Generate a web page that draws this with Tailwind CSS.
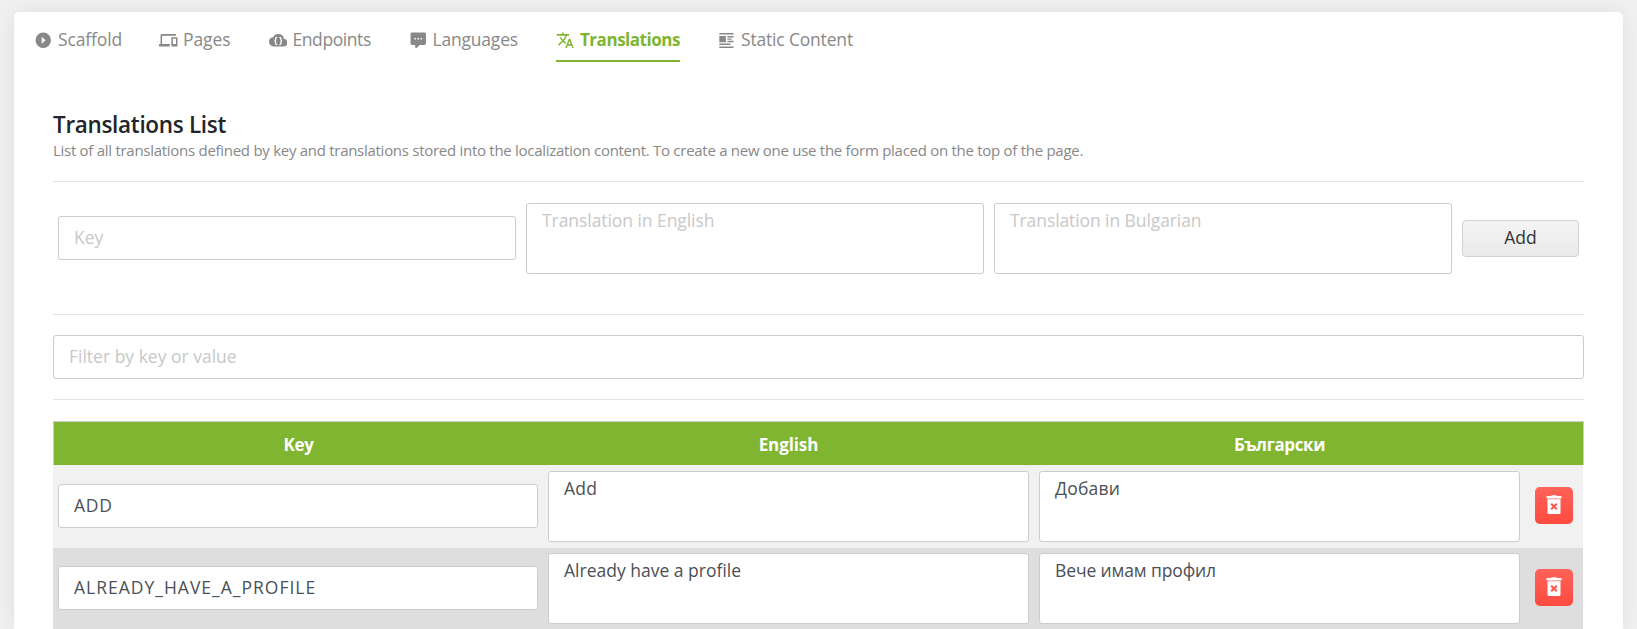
<!DOCTYPE html>
<html lang="en">
<head>
<meta charset="utf-8">
<title>Translations</title>
<script src="https://cdn.jsdelivr.net/npm/@tailwindcss/browser@4"></script>
</head>
<body class="h-[629px] overflow-hidden bg-[#f0f0f0] pt-3 pl-[14px] font-['Open_Sans',sans-serif] text-[17.5px] text-[#4b4f56]">
<main class="h-[617px] w-[1609px] rounded-t-[5px] bg-white pt-3 shadow-[0_0_20px_rgba(0,0,0,0.07)]">
  <nav class="ml-5 flex gap-[37px] leading-[31px] text-[#888] whitespace-nowrap">
    <a class="flex h-[38px] w-[88px] gap-[5.5px]">
      <svg class="mt-[7px] size-[18.5px] shrink-0" viewBox="0 0 24 24" fill="currentColor"><path fill-rule="evenodd" d="M12 2a10 10 0 1 0 0 20 10 10 0 0 0 0-20zM10 7.3v9.4l5-4.7z"/></svg>
      <span class="tracking-[-0.14px]">Scaffold</span>
    </a>
    <a class="flex h-[38px] w-[72.5px] gap-[5.5px]">
      <svg class="mt-[7px] size-[18.5px] shrink-0" viewBox="0 0 24 24" fill="currentColor"><path d="M4 6h18V4H4c-1.1 0-2 .9-2 2v11H0v3h14v-3H4V6zm19 2h-6c-.55 0-1 .45-1 1v10c0 .55.45 1 1 1h6c.55 0 1-.45 1-1V9c0-.55-.45-1-1-1zm-1 9h-4v-7h4v7z"/></svg>
      <span class="tracking-[-0.1px]">Pages</span>
    </a>
    <a class="flex h-[38px] w-[103px] gap-[5.5px]">
      <svg class="mt-[7px] size-[18.5px] shrink-0" viewBox="0 0 24 24"><path fill="currentColor" d="M19.35 10.04A7.49 7.49 0 0 0 12 4C9.11 4 6.6 5.64 5.35 8.04A5.994 5.994 0 0 0 0 14c0 3.31 2.69 6 6 6h13c2.76 0 5-2.24 5-5 0-2.64-2.05-4.78-4.65-4.96z"/><path fill="none" stroke="#fff" stroke-width="1.7" d="M10.6 8.2c-2.4 0-2 1.600-2 2.800 0 1.500-.6 1.900-1.600 1.900 1 0 1.600.5 1.600 1.900 0 1.300-.4 2.800 2 2.800M13.400 8.200c2.400 0 2 1.600 2 2.800 0 1.500.6 1.900 1.600 1.900-1 0-1.600.5-1.600 1.900 0 1.300.4 2.800-2 2.800"/></svg>
      <span class="tracking-[-0.42px]">Endpoints</span>
    </a>
    <a class="flex h-[38px] w-[110.5px] gap-[5.5px]">
      <svg class="mt-[7px] size-[18.5px] shrink-0" viewBox="0 0 24 24" fill="currentColor"><path d="M9,22A1,1 0 0,1 8,21V18H4A2,2 0 0,1 2,16V4C2,2.89 2.9,2 4,2H20A2,2 0 0,1 22,4V16A2,2 0 0,1 20,18H13.9L10.2,21.71C10,21.9 9.75,22 9.5,22V22H9M17,11V9H15V11H17M13,11V9H11V11H13M9,11V9H7V11H9Z"/></svg>
      <span class="tracking-[-0.2px]">Languages</span>
    </a>
    <a class="flex h-[38px] w-[124px] gap-[5.5px] border-b-2 border-[#7fb530] text-[17px] font-bold text-[#7fb530]">
      <svg class="mt-[7px] size-[18.5px] shrink-0" viewBox="0 0 24 24" fill="currentColor"><path d="M12.87,15.07L10.33,12.56L10.36,12.53C12.1,10.59 13.34,8.36 14.07,6H17V4H10V2H8V4H1V6H12.17C11.5,7.92 10.44,9.75 9,11.35C8.07,10.32 7.3,9.19 6.69,8H4.69C5.42,9.63 6.42,11.17 7.67,12.56L2.58,17.58L4,19L9,14L12.11,17.11L12.87,15.07M18.5,10H16.5L12,22H14L15.12,19H19.87L21,22H23L18.5,10M15.88,17L17.5,12.67L19.12,17H15.88Z"/></svg>
      <span class="tracking-[-0.47px]">Translations</span>
    </a>
    <a class="flex h-[38px] w-[137px] gap-[5.5px]">
      <svg class="mt-[7px] size-[18.5px] shrink-0" viewBox="0 0 24 24" fill="currentColor"><path d="M3 2.500h18.500v2H3zM3 6.500h8.500v8H3zM13.500 6.500h8v1.800h-8zM13.500 9.600h5.500v1.800h-5.500zM13.500 12.700h8v1.800h-8zM3 16.200h14.500v1.900H3zM3 20h18.500v2H3z"/></svg>
      <span class="tracking-[-0.18px]">Static Content</span>
    </a>
  </nav>

  <section class="mt-[47px] ml-[39px] w-[1531px]">
    <h1 class="h-[30px] text-[22.5px] leading-8 font-semibold tracking-[-0.32px] text-[#212529]">Translations List</h1>
    <p class="text-[15px] leading-[22px] tracking-[-0.279px] whitespace-nowrap text-[#888]">List of all translations defined by key and translations stored into the localization content. To create a new one use the form placed on the top of the page.</p>
    <hr class="mt-5 border-[#e4e4e4]">

    <form class="mt-[21px] flex h-[71px] items-center gap-[10px] px-[5px]">
      <input class="mb-px h-11 w-[458px] rounded-[3px] border border-[#ccc] bg-white px-[15px] pb-0.5 placeholder:text-[#c8c8c8]" placeholder="Key">
      <textarea class="block h-[71px] w-[458px] resize-none rounded-[3px] border border-[#ccc] bg-white px-[15px] pt-1 leading-6 tracking-[-0.06px] placeholder:text-[#c8c8c8]" placeholder="Translation in English"></textarea>
      <textarea class="block h-[71px] w-[458px] resize-none rounded-[3px] border border-[#ccc] bg-white px-[15px] pt-1 leading-6 tracking-[-0.09px] placeholder:text-[#c8c8c8]" placeholder="Translation in Bulgarian"></textarea>
      <button type="button" class="h-[37px] w-[117px] rounded-[4px] border border-[#d2d2d2] bg-linear-to-b from-[#f4f4f4] to-[#eaeaea] pb-0.5 text-[#333]">Add</button>
    </form>

    <hr class="mt-10 border-[#e4e4e4]">
    <input class="mt-5 block h-11 w-full rounded-[3px] border border-[#ccc] bg-white px-[15px] pb-0.5 placeholder:text-[#c8c8c8]" placeholder="Filter by key or value">
    <hr class="mt-5 border-[#e4e4e4]">

    <div class="mt-[21px]">
      <div class="grid h-11 grid-cols-[489px_491px_491px_58px] items-center border border-b-0 border-[#ccc] bg-[#7fb530] pt-[3px] text-center text-[17px] font-bold text-white">
        <span class="tracking-[-0.4px]">Key</span><span class="tracking-[-0.1px]">English</span><span class="tracking-[-0.39px]">Български</span><span></span>
      </div>
      <div class="flex h-[83px] w-[1530px] items-center gap-[10px] bg-[#f1f1f1] pl-[5px]">
        <input class="mb-px h-11 w-[480px] rounded-[3px] border border-[#ccc] bg-white px-[15px] pb-0.5 tracking-[0.8px]" value="ADD">
        <textarea class="block h-[71px] w-[481px] resize-none rounded-[3px] border border-[#ccc] bg-white px-[15px] pt-1 leading-6 tracking-[0.3px]">Add</textarea>
        <textarea class="block h-[71px] w-[481px] resize-none rounded-[3px] border border-[#ccc] bg-white px-[15px] pt-1 leading-6 tracking-[0.2px]">Добави</textarea>
        <button type="button" class="mb-0.5 ml-[5px] flex h-[37px] w-[38px] justify-center rounded-[5px] bg-linear-to-b from-[#ff6259] to-[#ff4a3f] pt-2">
          <svg class="h-[19px] w-4" viewBox="0 0 16 19"><path fill="#fff" d="M0.500 1H5l.8-.8h4.400l.8.8h4.500v2.300H.5z"/><path fill="#ffc2bf" d="M1.500 3.300h13v1h-13z"/><path fill="#fff" d="M1.500 4.300h13v13.200a1.500 1.500 0 0 1-1.500 1.500H3a1.500 1.500 0 0 1-1.500-1.500z"/><path fill="none" stroke="#ff5248" stroke-width="2" d="M5.200 8.700l5.600 5.600M10.800 8.700l-5.600 5.600"/></svg>
        </button>
      </div>
      <div class="flex h-[81px] w-[1530px] items-center gap-[10px] bg-[#dedede] pl-[5px]">
        <input class="mb-px h-11 w-[480px] rounded-[3px] border border-[#ccc] bg-white px-[15px] pb-0.5 tracking-[1px]" value="ALREADY_HAVE_A_PROFILE">
        <textarea class="block h-[71px] w-[481px] resize-none rounded-[3px] border border-[#ccc] bg-white px-[15px] pt-1 leading-6">Already have a profile</textarea>
        <textarea class="block h-[71px] w-[481px] resize-none rounded-[3px] border border-[#ccc] bg-white px-[15px] pt-1 leading-6 tracking-[-0.12px]">Вече имам профил</textarea>
        <button type="button" class="mb-0.5 ml-[5px] flex h-[37px] w-[38px] justify-center rounded-[5px] bg-linear-to-b from-[#ff6259] to-[#ff4a3f] pt-2">
          <svg class="h-[19px] w-4" viewBox="0 0 16 19"><path fill="#fff" d="M0.500 1H5l.8-.8h4.400l.8.8h4.500v2.300H.5z"/><path fill="#ffc2bf" d="M1.500 3.300h13v1h-13z"/><path fill="#fff" d="M1.500 4.300h13v13.200a1.500 1.500 0 0 1-1.500 1.500H3a1.500 1.500 0 0 1-1.500-1.500z"/><path fill="none" stroke="#ff5248" stroke-width="2" d="M5.200 8.700l5.600 5.600M10.800 8.700l-5.600 5.600"/></svg>
        </button>
      </div>
    </div>
  </section>
</main>
</body>
</html>
